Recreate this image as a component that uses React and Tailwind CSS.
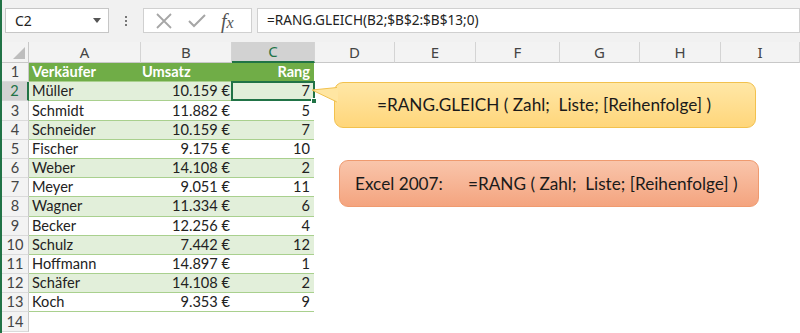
import React from "react";

const rows = [
  ["Müller", "10.159 €", "7"],
  ["Schmidt", "11.882 €", "5"],
  ["Schneider", "10.159 €", "7"],
  ["Fischer", "9.175 €", "10"],
  ["Weber", "14.108 €", "2"],
  ["Meyer", "9.051 €", "11"],
  ["Wagner", "11.334 €", "6"],
  ["Becker", "12.256 €", "4"],
  ["Schulz", "7.442 €", "12"],
  ["Hoffmann", "14.897 €", "1"],
  ["Schäfer", "14.108 €", "2"],
  ["Koch", "9.353 €", "9"],
];

const cols = [
  ["A", "w-[112px]"],
  ["B", "w-[91px]"],
  ["C", "w-[83px]"],
  ["D", "w-[80px]"],
  ["E", "w-[81px]"],
  ["F", "w-[84px]"],
  ["G", "w-[80px]"],
  ["H", "w-[81px]"],
  ["I", "flex-1"],
];

function RowHead({ n, active }) {
  return (
    <div
      className={
        "w-[27px] shrink-0 flex items-center justify-center border-b border-[#dadada] " +
        (active
          ? "bg-[#d2d2d2] text-[#217346] border-r-2 border-r-[#217346]"
          : "bg-[#f3f3f3] text-[#444] border-r border-r-[#c8c8c8]")
      }
    >
      {n}
    </div>
  );
}

export default function App() {
  return (
    <div
      className="w-[800px] h-[333px] overflow-hidden bg-white border-l-2 border-[#217346] text-[14.6px] text-[#222]"
      style={{ fontFamily: "Lato, 'Liberation Sans', sans-serif" }}
    >
      {/* Formula bar */}
      <div className="h-[42px] bg-[#f1f1f1] flex items-start pt-[8px] pl-[3px]">
        <div className="w-[104px] h-[25px] bg-white border border-[#c6c6c6] flex items-center justify-between pl-[9px] pr-[7px] text-[14px] text-[#222]" style={{ fontFamily: "'Noto Sans', sans-serif" }}>
          <span>C2</span>
          <svg width="8" height="5" viewBox="0 0 8 5"><path d="M0 0h8L4 5z" fill="#555" /></svg>
        </div>
        <div className="w-[34px] h-[25px] flex flex-col items-center justify-center gap-[2px]">
          <span className="w-[2px] h-[2px] bg-[#777]" />
          <span className="w-[2px] h-[2px] bg-[#777]" />
          <span className="w-[2px] h-[2px] bg-[#777]" />
        </div>
        <div className="w-[109px] h-[25px] bg-white border border-[#d0d0d0] flex items-center pl-[11px] gap-[14px]">
          <svg width="18" height="16" viewBox="0 0 18 16"><path d="M2 1l14 14M16 1L2 15" stroke="#a6a6a6" strokeWidth="1.8" /></svg>
          <svg width="20" height="16" viewBox="0 0 20 16"><path d="M2 8l5 5L18 2" stroke="#a6a6a6" strokeWidth="2" fill="none" /></svg>
          <span className="italic text-[20px] text-[#555] leading-none" style={{ fontFamily: "'Liberation Serif', serif" }}>
            f<span className="text-[16px]">x</span>
          </span>
        </div>
        <div className="ml-[5px] flex-1 h-[25px] bg-white border border-[#d0d0d0] flex items-center pl-[9px] text-[13.6px] text-[#222]" style={{ fontFamily: "'Noto Sans', sans-serif" }}>
          =RANG.GLEICH(B2;$B$2:$B$13;0)
        </div>
      </div>

      {/* Column headers */}
      <div className="flex h-[21px] text-[15px] text-[#444]" style={{ fontFamily: "'Noto Sans', sans-serif" }}>
        <div className="w-[27px] shrink-0 bg-[#f3f3f3] border-r border-b border-[#c8c8c8] flex items-end justify-end p-[3px]">
          <svg width="12" height="12" viewBox="0 0 12 12"><path d="M12 0v12H0z" fill="#bdbdbd" /></svg>
        </div>
        {cols.map(([c, w]) => (
          <div
            key={c}
            className={
              w +
              " shrink-0 flex items-center justify-center border-r border-[#d4d4d4] " +
              (c === "C"
                ? "bg-[#d2d2d2] text-[#217346] border-b-2 border-b-[#217346]"
                : "bg-[#f3f3f3] border-b border-b-[#c8c8c8]")
            }
          >
            {c}
          </div>
        ))}
      </div>

      {/* Grid */}
      <div className="relative">
        <div className="flex h-[19.2px]">
          <RowHead n={1} />
          <div className="w-[285px] flex bg-[#70ad47] text-white font-bold border-b border-[#a9d08e]">
            <div className="w-[112px] pl-[3px] flex items-center">Verkäufer</div>
            <div className="w-[91px] pl-[1px] flex items-center">Umsatz</div>
            <div className="w-[82px] pr-[4px] flex items-center justify-end">Rang</div>
          </div>
        </div>
        {rows.map((r, i) => (
          <div key={i} className="flex h-[19.2px]">
            <RowHead n={i + 2} active={i === 0} />
            <div
              className={
                "w-[285px] flex border-b border-[#a9d08e] " +
                (i % 2 === 0 ? "bg-[#e2efda]" : "bg-white")
              }
            >
              <div className="w-[112px] pl-[3px] flex items-center">{r[0]}</div>
              <div className="w-[91px] pr-[2px] flex items-center justify-end">{r[1]}</div>
              <div
                className={
                  "w-[82px] pr-[4px] flex items-center justify-end relative " +
                  (i === 0 ? "outline-2 outline-[#217346] -outline-offset-1" : "")
                }
              >
                {r[2]}
                {i === 0 && (
                  <span className="absolute right-[-3px] bottom-[-4px] w-[6px] h-[6px] bg-[#217346] border border-white" />
                )}
              </div>
            </div>
          </div>
        ))}
        <div className="flex h-[19.2px]">
          <RowHead n={14} />
        </div>

        {/* Callout: RANG.GLEICH */}
        <div className="absolute left-[332px] top-[19px] w-[422px] h-[46px] rounded-[9px] border border-[#f2c14e] bg-gradient-to-b from-[#ffe7a6] to-[#ffd67a] flex items-center pl-[42px] text-[17.2px] text-[#1a1a1a]">
          =RANG.GLEICH ( Zahl;&nbsp; Liste; [Reihenfolge] )
        </div>
        <svg className="absolute left-[308px] top-[22px]" width="28" height="18" viewBox="0 0 28 18">
          <path d="M27 2.5 L2 5 L27 17" fill="#ffe6a2" stroke="#f2c14e" strokeWidth="1" />
          <path d="M27.5 3 L27.5 16.5" stroke="#ffe6a2" strokeWidth="2" />
        </svg>

        {/* Callout: RANG (Excel 2007) */}
        <div className="absolute left-[337px] top-[97px] w-[420px] h-[47px] rounded-[9px] border border-[#ef9a6f] bg-gradient-to-b from-[#f9c5ab] to-[#f4a47f] flex items-center pl-[15px] text-[17.2px] text-[#1a1a1a]">
          <span className="w-[113px]">Excel 2007:</span>
          <span>=RANG ( Zahl;&nbsp; Liste; [Reihenfolge] )</span>
        </div>
      </div>
    </div>
  );
}
